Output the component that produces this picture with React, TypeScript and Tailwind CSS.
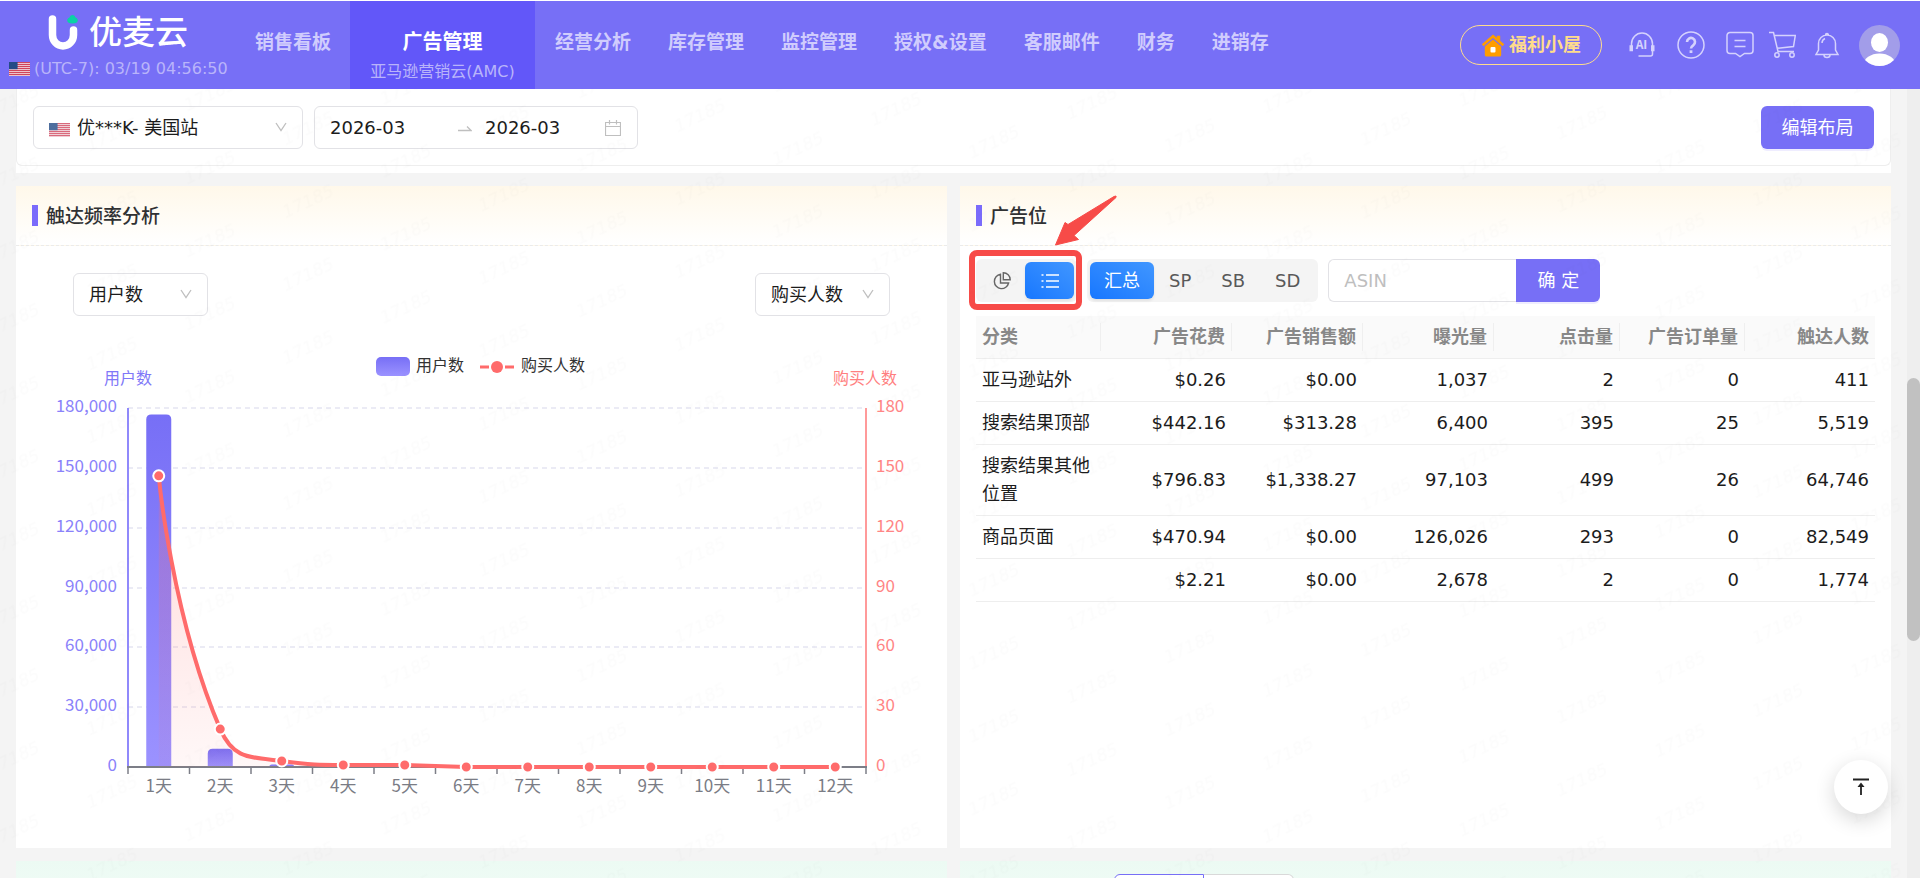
import type { ReactNode } from "react";

const NAV_BEFORE = ["销售看板"];
const NAV_AFTER = ["经营分析", "库存管理", "监控管理", "授权&设置", "客服邮件", "财务", "进销存"];

const COLUMNS = ["分类", "广告花费", "广告销售额", "曝光量", "点击量", "广告订单量", "触达人数"];

const ROWS = [
  ["亚马逊站外", "$0.26", "$0.00", "1,037", "2", "0", "411"],
  ["搜索结果顶部", "$442.16", "$313.28", "6,400", "395", "25", "5,519"],
  ["搜索结果其他位置", "$796.83", "$1,338.27", "97,103", "499", "26", "64,746"],
  ["商品页面", "$470.94", "$0.00", "126,026", "293", "0", "82,549"],
  ["", "$2.21", "$0.00", "2,678", "2", "0", "1,774"],
];

// chart geometry, in viewBox units
const LEFT = 112;
const RIGHT = 850;
const TOP = 92;
const BOTTOM = 451;
const BAND = (RIGHT - LEFT) / 12;

const USERS = [176800, 9200, 1300, 0, 0, 0, 0, 0, 0, 0, 0, 0];
const BUYERS = [146, 19, 3, 1, 1, 0, 0, 0, 0, 0, 0, 0];

const centerX = (i: number) => LEFT + BAND * (i + 0.5);
const buyersY = (v: number) => BOTTOM - (v / 180) * (BOTTOM - TOP);
const usersY = (v: number) => BOTTOM - (v / 180000) * (BOTTOM - TOP);

function buildLine() {
  const p = BUYERS.map((v, i) => [centerX(i), buyersY(v)]);
  const head = [
    `M${p[0][0]} ${p[0][1]}`,
    `C${p[0][0]} ${p[0][1]} ${p[0][0] + 13} ${p[1][1] - 113} ${p[1][0]} ${p[1][1]}`,
    `C${p[1][0] + 13} ${p[1][1] + 30} ${p[1][0] + 29} ${p[2][1] - 4} ${p[2][0]} ${p[2][1]}`,
    `C${p[2][0] + 29} ${p[3][1]} ${p[3][0] - 24} ${p[3][1]} ${p[3][0]} ${p[3][1]}`,
  ];
  return head.concat(p.slice(4).map(([x, y]) => `L${x} ${y}`)).join(" ");
}

function UsFlag({ className }: { className: string }) {
  return (
    <svg viewBox="0 0 22 14" preserveAspectRatio="none" className={className} aria-hidden="true">
      <rect width="22" height="14" fill="#f0d3da" />
      {[0, 2, 4, 6, 8, 10, 12].map((y) => (
        <rect key={y} y={y} width="22" height="1.1" fill="#d0455c" />
      ))}
      <rect width="9" height="7.2" fill="#234b86" />
    </svg>
  );
}

function Logo() {
  return (
    <svg viewBox="0 0 30 36" className="h-9 w-[30px]" aria-hidden="true">
      <path d="M4.5 4v16a10.500 11 0 0 0 21 0V15" fill="none" stroke="#fff" strokeWidth="7.5" strokeLinecap="round" />
      <path
        d="M24.5 0c1.6 0 2.7 1.300 3 2.600 1.500.5 2.400 1.600 2.300 2.900-.2 1.800-1.800 3-5.300 3s-5.200-1.200-5.300-3c0-1.300.9-2.400 2.300-2.900.4-1.300 1.400-2.600 3-2.600z"
        fill="#0ad2a5"
      />
    </svg>
  );
}

function HouseIcon() {
  return (
    <svg viewBox="0 0 24 23" className="h-[23px] w-6" aria-hidden="true">
      <path d="M12 0.500 0.800 10.300l1.700 1.900L12 4l9.500 8.200 1.700-1.900-4-3.500V1.800h-3.400v2z" fill="#ff9d00" />
      <path d="M12 5.600 3.800 12.600V21a1.600 1.600 0 0 0 1.600 1.600h13.200a1.600 1.600 0 0 0 1.600-1.600v-8.400z" fill="#ff9d00" />
      <rect x="9.5" y="13" width="5" height="5.5" rx="1" fill="#fff" />
    </svg>
  );
}

function HeaderIcon({ label, children }: { label: string; children: ReactNode }) {
  return (
    <button type="button" aria-label={label} className="text-[#d5d2fd]">
      <svg viewBox="0 0 28 28" className="size-7" fill="none" stroke="currentColor" strokeWidth="1.5">
        {children}
      </svg>
    </button>
  );
}

function NavItem({ label }: { label: string }) {
  return (
    <a href="#" className="text-[19px] leading-7 font-bold whitespace-nowrap text-[#d0ccfd]">
      {label}
    </a>
  );
}

function Header() {
  return (
    <header className="flex h-[89px] shrink-0 border-t border-white bg-[#776ff6]">
      <div className="flex w-[255px] shrink-0 flex-col pt-3">
        <div className="flex items-center gap-[11px] pl-12">
          <Logo />
          <span className="text-[33px] leading-10 font-medium text-white">优麦云</span>
        </div>
        <div className="flex items-center gap-1 pt-1 pl-[9px]">
          <UsFlag className="h-[14px] w-[21px]" />
          <span className="text-base leading-6 whitespace-nowrap text-[#b9b4fa]">(UTC-7): 03/19 04:56:50</span>
        </div>
      </div>

      <nav className="flex items-start">
        <div className="pt-[27px] pr-[19px]">
          {NAV_BEFORE.map((label) => (
            <NavItem key={label} label={label} />
          ))}
        </div>
        <a href="#" className="flex h-full w-[185px] flex-col items-center bg-[#6257f9] pt-[27px]">
          <span className="text-xl leading-7 font-bold text-white">广告管理</span>
          <span className="pt-1 text-base leading-6 whitespace-nowrap text-[#b9b4fa]">亚马逊营销云(AMC)</span>
        </a>
        <div className="flex gap-[37px] pt-[27px] pl-5">
          {NAV_AFTER.map((label) => (
            <NavItem key={label} label={label} />
          ))}
        </div>
      </nav>

      <div className="ml-auto flex items-center pr-5">
        <button
          type="button"
          className="mr-[26px] flex h-10 items-center gap-1 rounded-full border border-[#ffdc8c] px-5 text-lg font-bold text-[#ffdc8c]"
        >
          <HouseIcon />
          福利小屋
        </button>
        <div className="mr-[14px] flex gap-[21px]">
          <HeaderIcon label="AI 客服">
            <path d="M3.5 15v-2a10.500 11 0 0 1 21 0v2M24.5 20v3a2 2 0 0 1-2 2H10.500" />
            <path d="M2.500 14.300v6M4 14.300v6M24 14.300v6M25.500 14.300v6" strokeWidth="2" />
            <text
              x="13.5"
              y="18"
              textAnchor="middle"
              fill="currentColor"
              stroke="none"
              className="font-['Noto_Sans_CJK_SC',sans-serif] text-[12px] font-bold"
            >
              AI
            </text>
          </HeaderIcon>
          <HeaderIcon label="帮助">
            <circle cx="14" cy="14" r="13" />
            <path d="M10 11a4 4 0 1 1 6.200 3.300c-1.500 1-2.200 1.600-2.200 3.200" strokeWidth="2.6" />
            <path d="M14 19.300v2.700" strokeWidth="2.8" />
          </HeaderIcon>
          <HeaderIcon label="消息">
            <path d="M4 1.500h20a3 3 0 0 1 3 3v15a3 3 0 0 1-3 3h-5.500L14 25.500 9.500 22.500H4a3 3 0 0 1-3-3v-15a3 3 0 0 1 3-3z" />
            <path d="M8.500 9.500h11M8.500 15.500h11" />
          </HeaderIcon>
        </div>
        <div className="mr-[18px] flex gap-[17px]">
          <HeaderIcon label="购物车">
            <path d="M1 1.500h4.500L10 20.500h16M6.300 4.500h21L25.500 15.500 9 17.300" />
            <circle cx="9" cy="24" r="2.2" />
            <circle cx="24" cy="24" r="2.2" />
          </HeaderIcon>
          <HeaderIcon label="通知">
            <path d="M14 4a8.500 8.500 0 0 1 8.500 8.500V19l2.500 4.500H3L5.500 19v-6.500A8.500 8.500 0 0 1 14 4zM12.500 4a1.500 1.500 0 1 1 3 0M11 24a3 2.500 0 0 0 6 0M9 12a5 5 0 0 1 3-4.500" />
          </HeaderIcon>
        </div>
        <svg viewBox="0 0 41 41" className="size-[41px]" aria-hidden="true">
          <clipPath id="avatar-clip">
            <circle cx="20.5" cy="20.5" r="20.5" />
          </clipPath>
          <g clipPath="url(#avatar-clip)">
            <rect width="41" height="41" fill="#a29de9" />
            <ellipse cx="20.5" cy="17.5" rx="8.5" ry="9.5" fill="#fff" />
            <ellipse cx="20.5" cy="40" rx="16" ry="11.5" fill="#fff" />
          </g>
        </svg>
      </div>
    </header>
  );
}

function Chevron() {
  return (
    <svg viewBox="0 0 12 10" className="pointer-events-none absolute top-4 right-4 h-[10px] w-3" aria-hidden="true">
      <path d="M1 1l5 7.500L11 1" fill="none" stroke="#bfbfbf" strokeWidth="1.3" />
    </svg>
  );
}

function SelectBox({ label, value, className }: { label: string; value: string; className: string }) {
  return (
    <div className="relative">
      <select
        aria-label={label}
        className={`h-[43px] appearance-none rounded-md border border-[#e2e2e6] bg-white pr-8 text-lg text-[#1c1c1c] ${className}`}
      >
        <option>{value}</option>
      </select>
      <Chevron />
    </div>
  );
}

function FilterBar() {
  return (
    <section className="bg-white pb-[7px]">
      <div className="flex items-center gap-[11px] rounded-b-md border border-t-0 border-[#eeeeee] px-4 pt-[17px] pb-4">
        <div className="relative">
          <SelectBox label="店铺站点" value="优***K- 美国站" className="w-[270px] pl-[43px]" />
          <UsFlag className="pointer-events-none absolute top-[17px] left-4 h-[14px] w-[21px] opacity-80" />
        </div>
        <div className="flex h-[43px] w-[324px] items-center rounded-md border border-[#e2e2e6] bg-white pr-4 pl-[15px]">
          <input
            aria-label="开始月份"
            defaultValue="2026-03"
            className="w-32 min-w-0 text-lg text-[#1c1c1c] outline-none"
          />
          <svg viewBox="0 0 14 8" className="mr-[13px] h-2 w-[14px] shrink-0" aria-hidden="true">
            <path d="M0 6.500h13L9 2.500" fill="none" stroke="#bfbfbf" strokeWidth="1.3" />
          </svg>
          <input
            aria-label="结束月份"
            defaultValue="2026-03"
            className="w-0 flex-1 text-lg text-[#1c1c1c] outline-none"
          />
          <svg viewBox="0 0 16 16" className="size-4 shrink-0" fill="none" stroke="#bfbfbf" aria-hidden="true">
            <path d="M.5 2.500h15v13H.5zM.5 6.500h15M4.500 0v4.500M11.500 0v4.500" strokeWidth="1.2" />
          </svg>
        </div>
        <button
          type="button"
          className="ml-auto h-[43px] w-[113px] rounded-md bg-[#776ff6] text-lg text-white shadow-[0_2px_0_#efedff]"
        >
          编辑布局
        </button>
      </div>
    </section>
  );
}

function CardTitle({ children }: { children: string }) {
  return (
    <div className="flex h-[60px] items-center gap-2 border-b border-dashed border-[#ebebeb] bg-linear-to-b from-[#fff8ea] to-white px-4">
      <span className="h-[21px] w-[6px] bg-[#7a6bfb]" />
      <h2 className="text-[19px] leading-7 font-medium text-[#303133]">{children}</h2>
    </div>
  );
}

function ReachChart() {
  const line = buildLine();
  return (
    <svg
      viewBox="0 0 931 532"
      className="block h-auto w-full font-['Noto_Sans_CJK_SC',sans-serif]"
      role="img"
      aria-label="触达频率"
    >
      <defs>
        <linearGradient id="bar-fill" x1="0" y1="0" x2="0" y2="1">
          <stop offset="0" stopColor="#776ff6" />
          <stop offset="1" stopColor="#9b92ff" />
        </linearGradient>
        <linearGradient id="area-fill" x1="0" y1="0" x2="0" y2="1">
          <stop offset="0" stopColor="#ff6b6b" stopOpacity="0.25" />
          <stop offset="1" stopColor="#ff6b6b" stopOpacity="0.05" />
        </linearGradient>
      </defs>

      <rect x="360" y="41" width="34" height="19" rx="5" fill="url(#bar-fill)" />
      <text x="400" y="55" fill="#333" className="text-base">用户数</text>
      <path d="M464 51h9M489 51h9" stroke="#ff6b6b" strokeWidth="3" />
      <circle cx="481" cy="51" r="6" fill="#ff6b6b" />
      <text x="505" y="55" fill="#333" className="text-base">购买人数</text>

      <text x={LEFT} y="68" textAnchor="middle" fill="#8078f8" className="text-base">用户数</text>
      <text x={RIGHT - 1} y="68" textAnchor="middle" fill="#ff7f7f" className="text-base">购买人数</text>

      {[0, 1, 2, 3, 4, 5, 6].map((step) => {
        const y = Math.round(buyersY(step * 30));
        return (
          <g key={step}>
            {step > 0 && <path d={`M${LEFT} ${y}H${RIGHT}`} stroke="#ebebf5" strokeWidth="2" strokeDasharray="5 4" />}
            <text x={LEFT - 11} y={y + 4} textAnchor="end" fill="#8a82fa" className="text-[17px]">
              {(step * 30000).toLocaleString("en-US")}
            </text>
            <text x={RIGHT + 10} y={y + 4} fill="#ff8585" className="text-[17px]">
              {step * 30}
            </text>
          </g>
        );
      })}

      {USERS.map((v, i) => {
        const h = BOTTOM - usersY(v);
        const r = Math.min(5, h);
        const x = centerX(i) - 12.5;
        return v > 0 ? (
          <path
            key={i}
            d={`M${x} ${BOTTOM}v${r - h}q0 ${-r} ${r} ${-r}h${25 - 2 * r}q${r} 0 ${r} ${r}v${h - r}z`}
            fill="url(#bar-fill)"
          />
        ) : null;
      })}

      <path d={`M${LEFT} ${TOP}V${BOTTOM}`} stroke="#9089fb" strokeWidth="2" />
      <path d={`M${RIGHT} ${TOP}V${BOTTOM}`} stroke="#ff9a9a" strokeWidth="2" />
      <path d={`M${LEFT - 1} ${BOTTOM}H${RIGHT + 1}`} stroke="#7c7e87" strokeWidth="2" />
      {Array.from({ length: 13 }, (_, i) => (
        <path key={i} d={`M${LEFT + BAND * i} ${BOTTOM}v7`} stroke="#7c7e87" strokeWidth="1.5" />
      ))}
      {USERS.map((_, i) => (
        <text key={i} x={centerX(i)} y={BOTTOM + 25} textAnchor="middle" fill="#7a7c85" className="text-[17px]">
          {`${i + 1}天`}
        </text>
      ))}

      <path d={`${line} V${BOTTOM} H${centerX(0)} Z`} fill="url(#area-fill)" />
      <path d={line} fill="none" stroke="#ff6b6b" strokeWidth="4" strokeLinejoin="round" />
      {BUYERS.map((v, i) => (
        <circle key={i} cx={centerX(i)} cy={buyersY(v)} r="5.5" fill="#ff6b6b" stroke="#fff" strokeWidth="2" />
      ))}
    </svg>
  );
}

function ReachCard() {
  return (
    <section className="min-w-0 bg-white">
      <CardTitle>触达频率分析</CardTitle>
      <div className="flex justify-between px-[57px] pt-[27px]">
        <SelectBox label="左轴指标" value="用户数" className="w-[135px] pl-[15px]" />
        <SelectBox label="右轴指标" value="购买人数" className="w-[135px] pl-[15px]" />
      </div>
      <ReachChart />
    </section>
  );
}

const ACTIVE = "rounded-md bg-linear-to-tr from-[#1677ff] to-[#4096ff] text-white shadow-[0_2px_3px_rgba(0,0,0,0.08)]";

function PlacementToolbar() {
  return (
    <div className="flex gap-[10px] pt-[13px]">
      <div className="relative">
        <div className="flex h-[43px] w-[101px] rounded-md bg-[#f4f4f4] p-[3px]">
          <button type="button" aria-label="图表" className="flex flex-1 items-center justify-center text-[#666]">
            <svg viewBox="0 0 18 18" className="size-[18px]" fill="none" stroke="currentColor" strokeWidth="1.4">
              <path d="M7.500 2.300A7.200 7.200 0 1 0 15.600 11H7.500z" />
              <path d="M10.300.8v6.900h6.900A6.900 6.900 0 0 0 10.300.8z" />
            </svg>
          </button>
          <button type="button" aria-label="列表" className={`flex w-[49px] items-center justify-center ${ACTIVE}`}>
            <svg viewBox="0 0 18 18" className="size-[18px]" fill="none" stroke="currentColor" strokeWidth="1.5">
              <path d="M5 3h13M5 9h13M5 15h13M.5 3h2M.5 9h2M.5 15h2" />
            </svg>
          </button>
        </div>
        <div className="pointer-events-none absolute -top-[9px] -right-[5px] -bottom-2 -left-[7px] rounded-lg border-[6px] border-[#f74b48]" />
        <svg
          viewBox="0 0 64 52"
          className="pointer-events-none absolute -top-16 left-[78px] h-[52px] w-16"
          aria-hidden="true"
        >
          <path
            d="M1.500 50 11 27.500l3 2L60 1.500q3-1.500 2 1L20 40.500l4.500 4z"
            fill="#f74b48"
            stroke="#f74b48"
            strokeLinejoin="round"
          />
        </svg>
      </div>

      <div className="flex h-[43px] rounded-md bg-[#f4f4f4] p-[3px] text-lg text-[#595959]">
        <button type="button" className={`px-[14px] ${ACTIVE}`}>
          汇总
        </button>
        {["SP", "SB", "SD"].map((type) => (
          <button key={type} type="button" className="px-[15px]">
            {type}
          </button>
        ))}
      </div>

      <div className="flex h-[43px] text-lg">
        <input
          aria-label="ASIN"
          placeholder="ASIN"
          className="w-[188px] rounded-l-md border border-r-0 border-[#e2e2e6] px-[15px] outline-none placeholder:text-[#bfbfbf]"
        />
        <button type="button" className="w-[84px] rounded-r-md bg-[#776ff6] text-white shadow-[0_2px_0_#efedff]">
          确 定
        </button>
      </div>
    </div>
  );
}

function PlacementTable() {
  return (
    <table className="mt-[14px] w-full table-fixed text-right text-lg leading-7 text-[#1c1c1c]">
      <colgroup>
        <col className="w-[125px]" />
        <col className="w-[131px]" />
        <col className="w-[131px]" />
        <col className="w-[131px]" />
        <col className="w-[126px]" />
        <col className="w-[125px]" />
        <col />
      </colgroup>
      <thead>
        <tr className="border-b border-[#eeeeee] bg-[#fafafa] text-[#888]">
          {COLUMNS.map((name) => (
            <th key={name} scope="col" className="group px-0 py-[7px] font-bold first:text-left">
              <div className="border-r border-[#efefef] px-[6px] group-last:border-r-0">{name}</div>
            </th>
          ))}
        </tr>
      </thead>
      <tbody>
        {ROWS.map((row, i) => (
          <tr key={i} className="border-b border-[#eeeeee]">
            {row.map((cell, j) => (
              <td key={j} className="px-[6px] py-[7px] first:text-left">
                {cell}
              </td>
            ))}
          </tr>
        ))}
      </tbody>
    </table>
  );
}

function PlacementCard() {
  return (
    <section className="min-w-0 bg-white">
      <CardTitle>广告位</CardTitle>
      <div className="px-4">
        <PlacementToolbar />
        <PlacementTable />
      </div>
    </section>
  );
}

function NextRow() {
  return (
    <div className="grid grid-cols-2 gap-[13px]">
      <section className="h-24 bg-linear-to-b from-[#ecfaf3] to-[#f6fffb]" />
      <section className="h-24 bg-linear-to-b from-[#ecfaf3] to-[#f6fffb] pt-[13px] pl-[154px]">
        <div className="flex">
          <button type="button" aria-label="图表视图" className="h-10 w-[90px] rounded-l-md border border-[#776ff6] bg-white" />
          <button type="button" aria-label="列表视图" className="h-10 w-[90px] rounded-r-md border border-l-0 border-[#d9d9d9] bg-white" />
        </div>
      </section>
    </div>
  );
}

function Watermark() {
  return (
    <svg className="pointer-events-none absolute inset-0 size-full" aria-hidden="true">
      <pattern
        id="watermark"
        width="196"
        height="73"
        patternUnits="userSpaceOnUse"
        patternTransform="translate(63 175) skewY(-1.87)"
      >
        <g fill="#000" fillOpacity="0.01" textAnchor="middle" className="text-[17px] italic">
          <text transform="translate(49 18) rotate(-24)" y="6">17185</text>
          <text transform="translate(147 54) rotate(-24)" y="6">17185</text>
        </g>
      </pattern>
      <rect width="100%" height="100%" fill="url(#watermark)" />
    </svg>
  );
}

export default function App() {
  return (
    <div className="flex h-screen flex-col overflow-hidden bg-[#f4f4f4] font-['DejaVu_Sans','Noto_Sans_CJK_SC',sans-serif]">
      <Header />
      <div className="relative flex min-h-0 flex-1">
        <main className="min-w-0 flex-1 overflow-hidden px-4">
          <FilterBar />
          <div className="grid grid-cols-2 gap-[13px] py-[13px]">
            <ReachCard />
            <PlacementCard />
          </div>
          <NextRow />
        </main>
        <div className="w-[13px] shrink-0 bg-[#eeeeee] pt-[289px]">
          <div className="h-[263px] rounded-full bg-[#c1c1c1]" />
        </div>
        <Watermark />
        <button
          type="button"
          aria-label="回到顶部"
          className="absolute right-8 bottom-16 flex size-[54px] items-center justify-center rounded-full bg-white shadow-[0_6px_20px_rgba(0,0,0,0.16)]"
        >
          <svg viewBox="0 0 16 18" className="h-[18px] w-4" aria-hidden="true">
            <path d="M0 1.500h16M8 17V7" fill="none" stroke="#222" strokeWidth="1.8" />
            <path d="M8 4.500 11.500 9h-7z" fill="#222" />
          </svg>
        </button>
      </div>
    </div>
  );
}
